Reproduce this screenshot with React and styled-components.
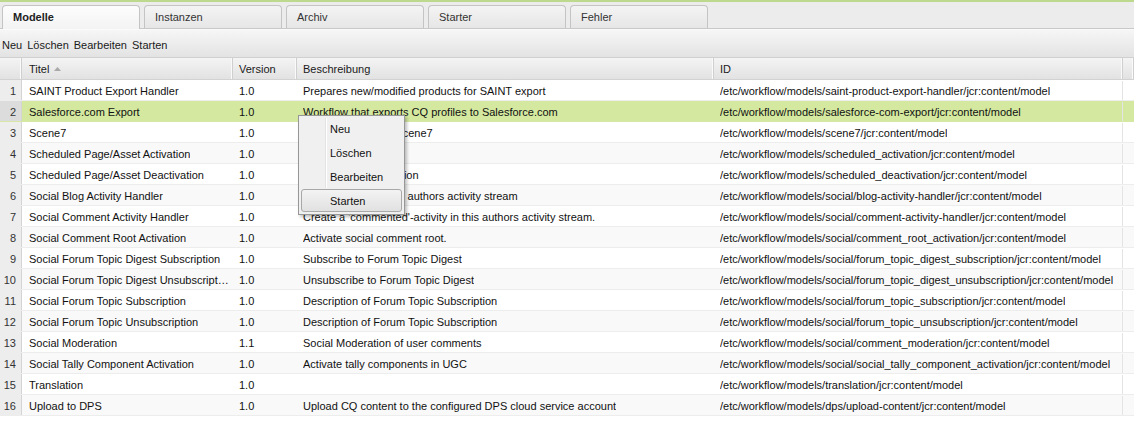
import React from "react";
import styled, { createGlobalStyle } from "styled-components";

const GlobalStyle = createGlobalStyle`
  html, body {
    margin: 0;
    padding: 0;
    background: #ffffff;
  }
  body {
    font-family: Tahoma, "Liberation Sans", Arial, sans-serif;
    font-size: 11px;
    color: #111;
  }
`;

const tabs = ["Modelle", "Instanzen", "Archiv", "Starter", "Fehler"];

const models = [
  ["SAINT Product Export Handler", "1.0", "Prepares new/modified products for SAINT export", "/etc/workflow/models/saint-product-export-handler/jcr:content/model"],
  ["Salesforce.com Export", "1.0", "Workflow that exports CQ profiles to Salesforce.com", "/etc/workflow/models/salesforce-com-export/jcr:content/model"],
  ["Scene7", "1.0", "Uploads images to scene7", "/etc/workflow/models/scene7/jcr:content/model"],
  ["Scheduled Page/Asset Activation", "1.0", "Scheduled Activation", "/etc/workflow/models/scheduled_activation/jcr:content/model"],
  ["Scheduled Page/Asset Deactivation", "1.0", "Scheduled Deactivation", "/etc/workflow/models/scheduled_deactivation/jcr:content/model"],
  ["Social Blog Activity Handler", "1.0", "Create activity in this authors activity stream", "/etc/workflow/models/social/blog-activity-handler/jcr:content/model"],
  ["Social Comment Activity Handler", "1.0", "Create a 'commented'-activity in this authors activity stream.", "/etc/workflow/models/social/comment-activity-handler/jcr:content/model"],
  ["Social Comment Root Activation", "1.0", "Activate social comment root.", "/etc/workflow/models/social/comment_root_activation/jcr:content/model"],
  ["Social Forum Topic Digest Subscription", "1.0", "Subscribe to Forum Topic Digest", "/etc/workflow/models/social/forum_topic_digest_subscription/jcr:content/model"],
  ["Social Forum Topic Digest Unsubscription", "1.0", "Unsubscribe to Forum Topic Digest", "/etc/workflow/models/social/forum_topic_digest_unsubscription/jcr:content/model"],
  ["Social Forum Topic Subscription", "1.0", "Description of Forum Topic Subscription", "/etc/workflow/models/social/forum_topic_subscription/jcr:content/model"],
  ["Social Forum Topic Unsubscription", "1.0", "Description of Forum Topic Subscription", "/etc/workflow/models/social/forum_topic_unsubscription/jcr:content/model"],
  ["Social Moderation", "1.1", "Social Moderation of user comments", "/etc/workflow/models/social/comment_moderation/jcr:content/model"],
  ["Social Tally Component Activation", "1.0", "Activate tally components in UGC", "/etc/workflow/models/social/social_tally_component_activation/jcr:content/model"],
  ["Translation", "1.0", "", "/etc/workflow/models/translation/jcr:content/model"],
  ["Upload to DPS", "1.0", "Upload CQ content to the configured DPS cloud service account", "/etc/workflow/models/dps/upload-content/jcr:content/model"],
];

const COLS = "22px 211px 64px 417px 409px";

const Page = styled.div`
  position: relative;
  width: 1134px;
  height: 436px;
  overflow: hidden;
  background: #ffffff;
`;

const TabStrip = styled.div`
  display: flex;
  align-items: flex-end;
  gap: 4px;
  height: 29px;
  padding-left: 2px;
  border-top: 2px solid #bcd98e;
  box-sizing: border-box;
  background: #ececec;
  border-bottom: 1px solid #c8c8c8;
`;

const Tab = styled.div`
  width: 138px;
  height: ${(p) => (p.$active ? "24px" : "23px")};
  box-sizing: border-box;
  padding: 5px 0 0 10px;
  border: 1px solid #c4c4c4;
  border-bottom: none;
  border-radius: 4px 4px 0 0;
  background: ${(p) =>
    p.$active
      ? "linear-gradient(#fdfdfd, #f3f3f3)"
      : "linear-gradient(#f4f4f4, #e6e6e6)"};
  font-weight: ${(p) => (p.$active ? "bold" : "normal")};
  color: ${(p) => (p.$active ? "#222" : "#333")};
  margin-bottom: ${(p) => (p.$active ? "-1px" : "0")};
`;

const Toolbar = styled.div`
  display: flex;
  align-items: center;
  gap: 5px;
  height: 29px;
  padding: 3px 0 0 2px;
  box-sizing: border-box;
  background: linear-gradient(#f6f6f6, #e3e3e3);
  border-top: 1px solid #fafafa;
  border-bottom: 1px solid #d0d0d0;
`;

const ToolButton = styled.span`
  color: #1a1a1a;
`;

const Header = styled.div`
  display: grid;
  grid-template-columns: ${COLS} 11px;
  height: 22px;
  background: linear-gradient(#f4f4f4, #e2e2e2);
  border-bottom: 1px solid #d2d2d2;
  box-sizing: border-box;
`;

const HeadCell = styled.div`
  display: flex;
  align-items: center;
  gap: 5px;
  padding-left: ${(p) => p.$pad || "6px"};
  border-right: 1px solid #cfcfcf;
  box-shadow: inset -1px 0 0 #fafafa;
  color: #1a1a1a;
  overflow: hidden;
`;

const SortArrow = styled.svg`
  width: 7px;
  height: 4px;
  fill: #a8a8a8;
`;

const Row = styled.div`
  display: grid;
  grid-template-columns: ${COLS};
  height: 21px;
  padding-top: 1px;
  box-sizing: border-box;
  border-bottom: 1px solid ${(p) => (p.$selected ? "#d6e8a6" : "#ededed")};
  background: ${(p) => (p.$selected ? "#d4e89f" : p.$odd ? "#f9f9f9" : "#ffffff")};
`;

const NumCell = styled.div`
  display: flex;
  align-items: center;
  justify-content: flex-end;
  margin-top: -1px;
  padding: 1px 5px 0 0;
  background: ${(p) => (p.$selected ? "#dcdcdc" : "#ededed")};
  border-right: 1px solid #d4d4d4;
  color: #333;
`;

const Cell = styled.div`
  display: flex;
  align-items: center;
  padding-left: ${(p) => p.$pad || "6px"};
  padding-right: 2px;
  white-space: nowrap;
  overflow: hidden;
  min-width: 0;
  color: #111;
  border-right: ${(p) => (p.$last ? "1px solid #e4e4e4" : "none")};
`;

const Text = styled.span`
  overflow: hidden;
  text-overflow: ellipsis;
`;

const Menu = styled.div`
  position: absolute;
  left: 298px;
  top: 115px;
  width: 107px;
  height: 100px;
  padding: 2px;
  box-sizing: border-box;
  background: #f0f0f0;
  border: 1px solid #979797;
  box-shadow: 2px 2px 3px rgba(0, 0, 0, 0.25);
  display: flex;
  flex-direction: column;
  gap: 1px;

  &::before {
    content: "";
    position: absolute;
    left: 26px;
    top: 2px;
    bottom: 26px;
    width: 1px;
    background: #e2e3e3;
    box-shadow: 1px 0 0 #ffffff;
  }
`;

const MenuItem = styled.div`
  height: 23px;
  display: flex;
  align-items: center;
  padding-left: 28px;
  box-sizing: border-box;
  border: 1px solid ${(p) => (p.$hover ? "#a8a8a8" : "transparent")};
  border-radius: 3px;
  background: ${(p) => (p.$hover ? "linear-gradient(#f3f3f3, #e1e1e1)" : "transparent")};
  color: #111;
`;

export default function App() {
  return (
    <Page>
      <GlobalStyle />
      <TabStrip>
        {tabs.map((t, i) => (
          <Tab key={t} $active={i === 0}>
            {t}
          </Tab>
        ))}
      </TabStrip>
      <Toolbar>
        <ToolButton>Neu</ToolButton>
        <ToolButton>Löschen</ToolButton>
        <ToolButton>Bearbeiten</ToolButton>
        <ToolButton>Starten</ToolButton>
      </Toolbar>
      <Header>
        <HeadCell />
        <HeadCell $pad="7px">
          Titel
          <SortArrow viewBox="0 0 7 4">
            <polygon points="0,4 3.5,0 7,4" />
          </SortArrow>
        </HeadCell>
        <HeadCell>Version</HeadCell>
        <HeadCell>Beschreibung</HeadCell>
        <HeadCell>ID</HeadCell>
        <HeadCell />
      </Header>
      {models.map((m, i) => (
        <Row key={m[3]} $odd={i % 2 === 1} $selected={i === 1}>
          <NumCell $selected={i === 1}>{i + 1}</NumCell>
          <Cell $pad="7px">
            <Text>{m[0]}</Text>
          </Cell>
          <Cell>{m[1]}</Cell>
          <Cell>
            <Text>{m[2]}</Text>
          </Cell>
          <Cell $last>
            <Text>{m[3]}</Text>
          </Cell>
        </Row>
      ))}
      <Menu>
        <MenuItem>Neu</MenuItem>
        <MenuItem>Löschen</MenuItem>
        <MenuItem>Bearbeiten</MenuItem>
        <MenuItem $hover>Starten</MenuItem>
      </Menu>
    </Page>
  );
}
